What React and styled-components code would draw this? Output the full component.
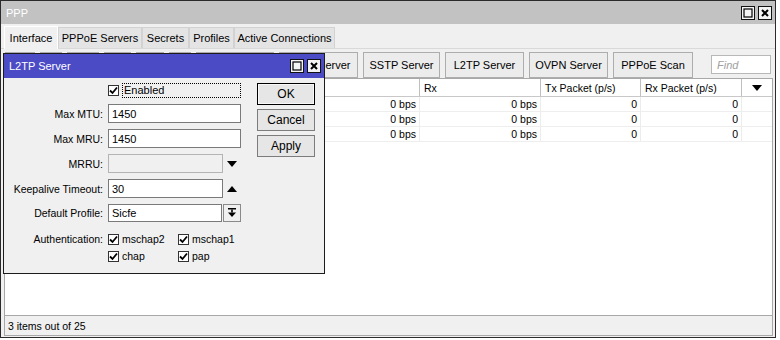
import React from 'react'
import styled, { createGlobalStyle } from 'styled-components'

const Global = createGlobalStyle`
  body {
    margin: 0;
    background: #ffffff;
    font-family: 'Liberation Sans', Arial, sans-serif;
    font-size: 10.5px;
    color: #000;
  }
  * { box-sizing: border-box; }
`

const Window = styled.div`
  background: #f0f0f0;
  border: 1px solid #2b2b2b;
  display: flex;
  flex-direction: column;
  height: 338px;
  position: relative;
  width: 776px;
`

const TitleBar = styled.div`
  align-items: center;
  background: ${({ active }) => (active ? '#4b4bc6' : '#c2c2c2')};
  color: #fff;
  display: flex;
  flex: none;
  font-size: 11px;
  height: ${({ active }) => (active ? '24px' : '23px')};
  justify-content: space-between;
  padding: 0 3px 0 5px;
`

const WinButtons = styled.div`
  display: flex;
  gap: 3px;
`

const WinButton = styled.div`
  align-items: center;
  background: #f4f4f4;
  border: 1px solid #111;
  display: flex;
  height: 14px;
  justify-content: center;
  width: 14px;
`

const Tabs = styled.div`
  align-items: flex-end;
  border-bottom: 1px solid #d9d9d9;
  display: flex;
  flex: none;
  height: 25px;
  padding-left: 3px;
`

const Tab = styled.div`
  align-items: center;
  background: ${({ active }) => (active ? '#f0f0f0' : '#e4e4e4')};
  border: 1px solid ${({ active }) => (active ? '#ffffff' : '#d2d2d2')};
  border-bottom: none;
  display: flex;
  font-size: 11px;
  height: ${({ active }) => (active ? '23px' : '21px')};
  justify-content: center;
  margin-bottom: ${({ active }) => (active ? '-1px' : '0')};
  width: ${({ w }) => w}px;
`

const Toolbar = styled.div`
  align-items: center;
  display: flex;
  flex: none;
  gap: 5px;
  height: 29px;
  padding: 2px 4px 0 4px;
`

const ToolButton = styled.div`
  align-items: center;
  background: #ececec;
  border: 1px solid #adadad;
  display: flex;
  font-size: 11px;
  height: 26px;
  justify-content: center;
  width: ${({ w }) => w}px;
`

const Find = styled.div`
  align-items: center;
  background: #fff;
  border: 1px solid #b8b8b8;
  color: #a0a0a0;
  display: flex;
  font-size: 11px;
  font-style: italic;
  height: 19px;
  margin-left: auto;
  padding-left: 5px;
  width: 60px;
`

const Table = styled.div`
  background: #fff;
  border: 1px solid #a8a8a8;
  flex: 1;
  margin: 0 2px 0 3px;
`

const HeadRow = styled.div`
  border-bottom: 1px solid #c8c8c8;
  display: grid;
  grid-template-columns: 140px 90px 70px 115px 121px 100px 101px 1fr;
  height: 18px;
`

const HeadCell = styled.div`
  align-items: center;
  border-right: 1px solid #c0c0c0;
  display: flex;
  justify-content: ${({ center }) => (center ? 'center' : 'flex-start')};
  padding-left: ${({ center }) => (center ? '0' : '4px')};
  &:last-child { border-right: none; }
`

const Row = styled.div`
  border-bottom: 1px solid #eeeeee;
  display: grid;
  grid-template-columns: 140px 90px 70px 115px 121px 100px 101px 1fr;
  height: 15px;
`

const Cell = styled.div`
  align-items: center;
  border-right: 1px solid #ececec;
  display: flex;
  justify-content: flex-end;
  padding: 0 3px;
  &:last-child { border-right: none; }
`

const Status = styled.div`
  align-items: center;
  border: 1px solid #a8a8a8;
  border-top: none;
  display: flex;
  flex: none;
  height: 20px;
  margin: 0 2px 1px 3px;
  padding-left: 3px;
`

const Dialog = styled.div`
  background: #f0f0f0;
  border: 1px solid #1c1c1c;
  display: flex;
  flex-direction: column;
  height: 221px;
  left: 2px;
  position: absolute;
  top: 52px;
  width: 322px;
`

const DialogBody = styled.div`
  display: flex;
  gap: 16px;
  padding: 5px 8px 0 0;
`

const Form = styled.div`
  align-items: center;
  column-gap: 5px;
  display: grid;
  grid-template-columns: 99px 133px;
  row-gap: 6px;
`

const Label = styled.div`
  align-self: ${({ top }) => (top ? 'start' : 'center')};
  padding-top: ${({ top }) => (top ? '5px' : '0')};
  text-align: right;
`

const Field = styled.div`
  align-items: center;
  display: flex;
  height: ${({ h }) => h || 19}px;
`

const Input = styled.div`
  align-items: center;
  background: ${({ disabled }) => (disabled ? '#f0f0f0' : '#fff')};
  border: 1px solid ${({ disabled }) => (disabled ? '#b4b4b4' : '#7a7a7a')};
  display: flex;
  font-size: 11px;
  height: ${({ h }) => h || 19}px;
  padding-left: 3px;
  width: ${({ w }) => w}px;
`

const Arrow = styled.div`
  align-items: center;
  display: flex;
  justify-content: center;
  width: 18px;
`

const PickButton = styled.div`
  align-items: center;
  background: #f0f0f0;
  border: 1px solid #8a8a8a;
  display: flex;
  height: 18px;
  justify-content: center;
  margin-left: 1px;
  width: 18px;
`

const Check = styled.div`
  align-items: center;
  display: flex;
  gap: 3px;
  width: ${({ w }) => w || 'auto'};
`

const Box = styled.div`
  align-items: center;
  background: #fff;
  border: 1px solid #333;
  display: flex;
  flex: none;
  height: 11px;
  justify-content: center;
  width: 11px;
`

const Focus = styled.div`
  border: 1px dotted #000;
  flex: 1;
  font-size: 11px;
  height: 15px;
  line-height: 13px;
  padding-left: 1px;
`

const AuthGrid = styled.div`
  display: grid;
  grid-template-columns: 70px 60px;
  padding-top: 5px;
  row-gap: 5px;
`

const Buttons = styled.div`
  display: flex;
  flex-direction: column;
  gap: 4px;
`

const DlgButton = styled.div`
  align-items: center;
  background: #e6e6e6;
  border: 1px solid ${({ primary }) => (primary ? '#000' : '#7c7c7c')};
  box-shadow: ${({ primary }) => (primary ? 'inset 0 0 0 1px #f8f8f8' : 'none')};
  display: flex;
  font-size: 12px;
  height: 22px;
  justify-content: center;
  width: 58px;
`

const MaxIcon = () => (
  <svg width="10" height="10" viewBox="0 0 10 10">
    <rect x="1" y="1" width="8" height="8" fill="none" stroke="#000" strokeWidth="1.2" />
  </svg>
)

const CloseIcon = () => (
  <svg width="10" height="10" viewBox="0 0 10 10">
    <path d="M2 2 L8 8 M8 2 L2 8" stroke="#000" strokeWidth="2" />
  </svg>
)

const Tick = () => (
  <svg width="9" height="9" viewBox="0 0 9 9">
    <path d="M1 4.5 L3.5 7 L8 1.5" fill="none" stroke="#000" strokeWidth="1.8" />
  </svg>
)

const Down = () => (
  <svg width="10" height="6" viewBox="0 0 10 6"><polygon points="0,0 10,0 5,6" fill="#000" /></svg>
)

const Up = () => (
  <svg width="10" height="6" viewBox="0 0 10 6"><polygon points="0,6 10,6 5,0" fill="#000" /></svg>
)

const DropIcon = () => (
  <svg width="8" height="10" viewBox="0 0 8 10">
    <rect x="0" y="0" width="8" height="1.5" fill="#000" />
    <rect x="3.2" y="1.5" width="1.6" height="3" fill="#000" />
    <polygon points="0,4.5 8,4.5 4,9" fill="#000" />
  </svg>
)

// buttons left of "SSTP Server" sit under the dialog; only their top edge shows
const tools = [
  { w: 30 }, { w: 22 }, { w: 32 }, { w: 27 }, { w: 28 }, { w: 22 }, { w: 78 },
  { w: 79, t: 'PPTP Server' }, { w: 77, t: 'SSTP Server' }, { w: 79, t: 'L2TP Server' },
  { w: 79, t: 'OVPN Server' }, { w: 80, t: 'PPPoE Scan' }
]

const tabs = [
  { t: 'Interface', w: 54, active: true }, { t: 'PPPoE Servers', w: 84 }, { t: 'Secrets', w: 47 },
  { t: 'Profiles', w: 45 }, { t: 'Active Connections', w: 101 }
]

const rows = [
  ['0 bps', '0 bps', '0', '0'],
  ['0 bps', '0 bps', '0', '0'],
  ['0 bps', '0 bps', '0', '0']
]

const Checkbox = ({ label }) => (
  <Check><Box><Tick /></Box>{label}</Check>
)

const App = () => (
  <>
    <Global />
    <Window>
      <TitleBar>
        <span>PPP</span>
        <WinButtons>
          <WinButton><MaxIcon /></WinButton>
          <WinButton><CloseIcon /></WinButton>
        </WinButtons>
      </TitleBar>
      <Tabs>
        {tabs.map(t => <Tab key={t.t} w={t.w} active={t.active}>{t.t}</Tab>)}
      </Tabs>
      <Toolbar>
        {tools.map((b, i) => <ToolButton key={i} w={b.w}>{b.t}</ToolButton>)}
        <Find>Find</Find>
      </Toolbar>
      <Table>
        <HeadRow>
          <HeadCell />
          <HeadCell />
          <HeadCell />
          <HeadCell />
          <HeadCell>Rx</HeadCell>
          <HeadCell>Tx Packet (p/s)</HeadCell>
          <HeadCell>Rx Packet (p/s)</HeadCell>
          <HeadCell center><Down /></HeadCell>
        </HeadRow>
        {rows.map((r, i) => (
          <Row key={i}>
            <Cell />
            <Cell />
            <Cell />
            {r.map((v, j) => <Cell key={j}>{v}</Cell>)}
            <Cell />
          </Row>
        ))}
      </Table>
      <Status>3 items out of 25</Status>

      <Dialog>
        <TitleBar active>
          <span>L2TP Server</span>
          <WinButtons>
            <WinButton><MaxIcon /></WinButton>
            <WinButton><CloseIcon /></WinButton>
          </WinButtons>
        </TitleBar>
        <DialogBody>
          <Form>
            <Label />
            <Field h={15}>
              <Check w="100%"><Box><Tick /></Box><Focus>Enabled</Focus></Check>
            </Field>

            <Label>Max MTU:</Label>
            <Field><Input w={133}>1450</Input></Field>

            <Label>Max MRU:</Label>
            <Field><Input w={133}>1450</Input></Field>

            <Label>MRRU:</Label>
            <Field><Input w={115} disabled /><Arrow><Down /></Arrow></Field>

            <Label>Keepalive Timeout:</Label>
            <Field><Input w={115}>30</Input><Arrow><Up /></Arrow></Field>

            <Label>Default Profile:</Label>
            <Field h={18}><Input w={114} h={18}>Sicfe</Input><PickButton><DropIcon /></PickButton></Field>

            <Label top>Authentication:</Label>
            <AuthGrid>
              <Checkbox label="mschap2" />
              <Checkbox label="mschap1" />
              <Checkbox label="chap" />
              <Checkbox label="pap" />
            </AuthGrid>
          </Form>
          <Buttons>
            <DlgButton primary>OK</DlgButton>
            <DlgButton>Cancel</DlgButton>
            <DlgButton>Apply</DlgButton>
          </Buttons>
        </DialogBody>
      </Dialog>
    </Window>
  </>
)

export default App
